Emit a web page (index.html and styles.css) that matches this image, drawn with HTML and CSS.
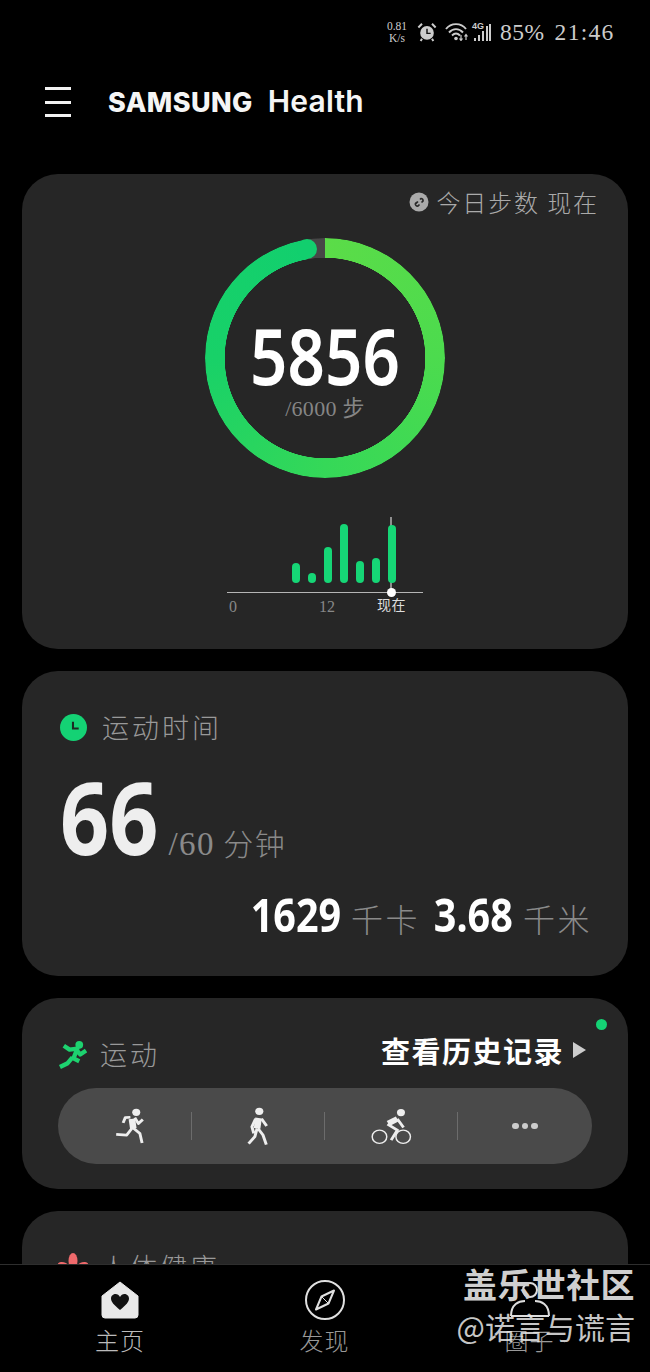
FILE: index.html
```html
<!DOCTYPE html>
<html lang="zh">
<head>
<meta charset="utf-8">
<title>Samsung Health</title>
<link rel="stylesheet" href="styles.css">
</head>
<body>
<div class="screen">
  <div class="status">
    <div class="speed">0.81<br>K/s</div>
    <svg class="st-alarm" viewBox="0 0 22 22"><circle cx="11" cy="12" r="7.5" fill="#ccc"/><path d="M11 7.5V12.5H15" fill="none" stroke="#111" stroke-width="1.6"/><path d="M1.5 6 5.5 2M20.5 6 16.500 2M5.500 18.500 4 21M16.500 18.500 18 21" stroke="#ccc" stroke-width="2.2" fill="none"/></svg>
    <svg class="st-wifi" viewBox="0 0 24 18"><path d="M1 6C6-.5 16-.5 21 6M4 9.500C8 5 14 5 18 9.500M7 12.500C9.500 10 12.500 10 15 12.500" fill="none" stroke="#ccc" stroke-width="1.900"/><circle cx="11" cy="15.500" r="1.800" fill="#ccc"/><path d="M16 12v5M14.500 15.500 16 17.500 17.500 15.500M21 17v-5M19.500 13.500 21 11.500 22.500 13.500" fill="none" stroke="#ccc" stroke-width="1.200"/></svg>
    <div class="st-net"><span class="st-4g">4G</span><svg class="st-bars" viewBox="0 0 17 18"><path d="M1 18v-3M5 18v-6M9 18v-10M13 18V3M16 18V1" stroke="#ccc" stroke-width="2" fill="none"/></svg></div>
    <span class="st-text st-pct">85%</span>
    <span class="st-text st-time">21:46</span>
  </div>

  <header class="appbar">
    <div class="burger"><i></i><i></i><i></i></div>
    <div class="logo"><span class="logo-brand">SAMSUNG</span><span class="logo-app">Health</span></div>
  </header>

  <main class="cards">
    <section class="card card-steps">
      <div class="steps-head">
        <svg class="link-icon" viewBox="0 0 20 20"><circle cx="10" cy="10" r="9.500" fill="#aaa"/><path d="M6 12.500 9 9.500M11 7.500 12 6.500A2 2 0 0 1 14 9L12.500 10.500M8 10 6.500 11.500A2 2 0 0 0 9 14L10.500 12.500" fill="none" stroke="#2a2a2a" stroke-width="1.700"/></svg>
        <span class="steps-title">今日步数 现在</span>
      </div>
      <div class="ring">
        <div class="ring-arc"></div>
        <div class="ring-cap"></div>
        <div class="ring-text">
          <div class="ring-num">5856</div>
          <div class="ring-goal">/6000 步</div>
        </div>
      </div>
      <div class="chart">
        <div class="bars">
          <i style="height:20px"></i><i style="height:10px"></i><i style="height:36px"></i><i style="height:59px"></i><i style="height:22px"></i><i style="height:25px"></i><i style="height:58px"></i>
        </div>
        <div class="now-line"></div>
        <div class="now-dot"></div>
        <div class="axis">
          <span class="axis-0">0</span><span class="axis-12">12</span><span class="axis-now">现在</span>
        </div>
      </div>
    </section>

    <section class="card card-time">
      <div class="row-title">
        <svg class="clock" viewBox="0 0 26 26"><circle cx="13" cy="13" r="13" fill="#14d274"/><path d="M12.500 7.500V14H18" fill="none" stroke="#1d2a22" stroke-width="2"/></svg>
        <span class="title-text">运动时间</span>
      </div>
      <div class="time-main">
        <span class="big-num">66</span>
        <span class="goal"><span class="goal-num">/60</span> 分钟</span>
      </div>
      <div class="time-sub">
        <span class="mid-num">1629</span><span class="unit">千卡</span>
        <span class="mid-num mid-gap">3.68</span><span class="unit">千米</span>
      </div>
    </section>

    <section class="card card-ex">
      <span class="new-dot"></span>
      <div class="ex-head">
        <div class="ex-title">
          <svg class="ex-icon" viewBox="0 0 30 30"><circle cx="22" cy="5" r="4" fill="#1dd26f"/><path d="M6 6 12 10 20 9 16 19 22 22M19 10 23 15 29 11M15 18 10 24 2 28" fill="none" stroke="#1dd26f" stroke-width="4.500" stroke-linejoin="round"/></svg>
          <span class="title-text">运动</span>
        </div>
        <div class="history"><span class="history-text">查看历史记录</span><span class="tri"></span></div>
      </div>
      <div class="pill">
        <div class="pill-cell">
          <svg class="ic-run" viewBox="205 260 85 115" preserveAspectRatio="none"><circle cx="266" cy="276" r="11" fill="#eee"/><path d="M254 296 258 325" stroke="#eee" stroke-width="18" fill="none"/><path d="M262 292 272 310 284 298M250 291 236 292 230 308M256 322 240 345 211 343M256 322 276 340 282 369" stroke="#eee" stroke-width="8" fill="none" stroke-linejoin="round"/></svg>
        </div>
        <div class="pill-cell">
          <svg class="ic-walk" viewBox="570 258 65 120" preserveAspectRatio="none"><circle cx="606" cy="274" r="11" fill="#eee"/><path d="M604 294 600 325" stroke="#eee" stroke-width="18" fill="none"/><path d="M596 296 586 320 591 340M612 296 626 318M600 325 594 350 577 371M602 325 616 345 625 374" stroke="#eee" stroke-width="8" fill="none" stroke-linejoin="round"/></svg>
        </div>
        <div class="pill-cell">
          <svg class="ic-bike" viewBox="910 260 118 118" preserveAspectRatio="none"><circle cx="995" cy="277" r="11" fill="#eee"/><circle cx="936" cy="350" r="20" fill="none" stroke="#eee" stroke-width="4"/><circle cx="1001" cy="350" r="20" fill="none" stroke="#eee" stroke-width="4"/><path d="M985 296 960 310" stroke="#eee" stroke-width="17" fill="none"/><path d="M985 296 1002 322M958 312 985 330 968 360" stroke="#eee" stroke-width="8" fill="none"/></svg>
        </div>
        <div class="pill-cell pill-more"><i></i><i></i><i></i></div>
      </div>
    </section>

    <section class="card card-body">
      <div class="row-title">
        <svg class="flower" viewBox="0 0 30 30"><g fill="#ef6a6c"><ellipse cx="15" cy="9" rx="4.500" ry="8"/><ellipse cx="6" cy="15" rx="7" ry="4.500" transform="rotate(25 6 15)"/><ellipse cx="24" cy="15" rx="7" ry="4.500" transform="rotate(-25 24 15)"/><ellipse cx="9" cy="24" rx="4" ry="7" transform="rotate(30 9 24)"/><ellipse cx="21" cy="24" rx="4" ry="7" transform="rotate(-30 21 24)"/></g></svg>
        <span class="title-text">人体健康</span>
      </div>
    </section>
  </main>

  <nav class="tabbar">
    <div class="tab">
      <svg class="tab-home" viewBox="0 0 38 38"><path d="M19 1 37 15V34a3 3 0 0 1-3 3H4a3 3 0 0 1-3-3V15Z" fill="#e8e8e8" stroke="#e8e8e8" stroke-linejoin="round"/><path d="M19 29C13 24 10 21 10 17.500 10 14.500 12.500 13 14.500 13 16.500 13 18 14 19 16 20 14 21.500 13 23.500 13 25.500 13 28 14.500 28 17.500 28 21 25 24 19 29Z" fill="#111"/></svg>
      <span class="tab-label tab-on">主页</span>
    </div>
    <div class="tab">
      <svg class="tab-compass" viewBox="0 0 40 40"><circle cx="20" cy="20" r="19" fill="none" stroke="#e0e0e0" stroke-width="2"/><path d="M29 10.500 23.500 23.500 11 29.500 16.500 16.500Z" fill="none" stroke="#e0e0e0" stroke-width="2" stroke-linejoin="round"/><path d="M16.500 16.500 23.500 23.500" stroke="#e0e0e0" stroke-width="1"/></svg>
      <span class="tab-label">发现</span>
    </div>
    <div class="tab">
      <svg class="tab-group" viewBox="0 0 42 40"><circle cx="21" cy="10" r="7" fill="none" stroke="#ddd" stroke-width="2"/><path d="M2 36C2 24 10 21 16 21M40 36C40 24 32 21 26 21M2 36H40" fill="none" stroke="#ddd" stroke-width="2"/></svg>
      <span class="tab-label">圈子</span>
    </div>
  </nav>

  <div class="watermark">
    <div class="wm-top">盖乐世社区</div>
    <div class="wm-bot">@诺言与谎言</div>
  </div>
</div>
</body>
</html>
```
FILE: styles.css
```css
* { box-sizing: border-box; }
html, body { margin: 0; padding: 0; background: #000; }
.screen {
  position: relative;
  width: 650px;
  height: 1372px;
  overflow: hidden;
  background: #000;
  color: #fff;
  font-family: "Liberation Serif", "Noto Sans CJK SC", serif;
}

/* status bar */
.status {
  height: 64px;
  padding: 0 0 0 385px;
  display: flex;
  align-items: center;
  color: #ccc;
}
.speed { width: 24px; font-size: 11.500px; line-height: 12px; text-align: center; color: #ccc; }
.st-alarm { width: 20px; height: 20px; margin-left: 8px; }
.st-wifi { width: 24px; height: 18px; margin-left: 8px; }
.st-net { position: relative; width: 21px; height: 20px; margin-left: 1px; }
.st-4g { position: absolute; left: 2px; top: -1px; font: 700 9px/10px "Liberation Sans", sans-serif; }
.st-bars { position: absolute; left: 4px; top: 1px; width: 17px; height: 18px; }
.st-text { font-size: 23.500px; line-height: 28px; white-space: nowrap; }
.st-pct { margin-left: 9px; letter-spacing: 0.500px; }
.st-time { margin-left: 10px; letter-spacing: 1.300px; }

/* app bar */
.appbar { height: 76px; display: flex; align-items: center; padding-left: 45px; }
.burger { width: 26px; height: 30px; display: flex; flex-direction: column; justify-content: space-between; }
.burger i { display: block; height: 3px; background: #f2f2f2; }
.logo { margin-left: 37px; display: flex; align-items: baseline; color: #f5f5f5; }
.logo-brand { font: 800 27px/30px Inter, sans-serif; letter-spacing: 0.400px; }
.logo-app { margin-left: 15px; font: 600 30px/30px Inter, sans-serif; letter-spacing: 0.200px; }

/* cards */
.cards { padding: 34px 22px 0; display: flex; flex-direction: column; gap: 22px; }
.card { position: relative; background: #262626; border-radius: 36px; }
.title-text { color: #999; font-size: 27px; line-height: 34px; letter-spacing: 3px; font-family: "Noto Sans CJK SC", serif; font-weight: 300; }

.card-steps { height: 475px; padding-top: 14px; display: flex; flex-direction: column; align-items: center; }
.steps-head { align-self: flex-end; display: flex; align-items: center; padding-right: 29px; height: 28px; }
.link-icon { width: 20px; height: 20px; margin-right: 7px; }
.steps-title { color: #aaa; font: 300 24px/28px "Noto Sans CJK SC", serif; letter-spacing: 1.900px; white-space: pre; }

.ring { position: relative; width: 240px; height: 240px; margin-top: 22px; }
.ring-arc {
  width: 100%;
  height: 100%;
  border-radius: 50%;
  background: conic-gradient(#5bdc48 0deg, #4cdb4e 90deg, #35d858 180deg, #18d168 270deg, #12cf6e 350.400deg, #474747 350.400deg, #474747 360deg);
  -webkit-mask: radial-gradient(closest-side, transparent calc(100% - 20px), #000 calc(100% - 19.500px));
  mask: radial-gradient(closest-side, transparent calc(100% - 20px), #000 calc(100% - 19.500px));
}
.ring-cap { position: absolute; left: 91.700px; top: 1px; width: 20px; height: 20px; border-radius: 50%; background: #12cf6e; }
.ring-text { position: absolute; inset: 0; padding-top: 88px; text-align: center; }
.ring-num { font: 600 77px/60px "Noto Sans", sans-serif; color: #fff; transform: scaleX(0.85); }
.ring-goal { margin-top: 9px; font-size: 22px; line-height: 28px; color: #858585; letter-spacing: 0.300px; }

.chart { position: relative; width: 196px; height: 76px; margin-top: 39px; border-bottom: 1px solid #b5b5b5; }
.bars { height: 66px; padding: 0 0 0 65px; display: flex; gap: 8px; align-items: flex-end; }
.bars i { width: 8px; border-radius: 4px; background: #16d676; display: block; }
.now-line { position: absolute; left: 163px; top: 0; width: 2px; height: 76px; background: #8f8f8f; z-index: 0; }
.bars i:last-child { position: relative; z-index: 1; }
.now-dot { position: absolute; left: 159.500px; top: 71px; width: 9px; height: 9px; border-radius: 50%; background: #fff; }
.axis { position: absolute; left: 0; top: 80px; width: 100%; height: 20px; font-size: 16px; line-height: 20px; color: #888; display: flex; }
.axis-0 { margin-left: 2px; }
.axis-12 { margin-left: 82px; }
.axis-now { margin-left: 42px; margin-top: -1px; font-size: 14px; color: #ddd; letter-spacing: 0.500px; white-space: nowrap; }

.card-time { height: 305px; padding: 39px 36px 0 38px; }
.row-title { display: flex; align-items: center; gap: 15px; }
.clock { width: 27px; height: 27px; }
.time-main { display: flex; align-items: baseline; margin-top: 14px; }
.big-num { font: 700 100px/116px "Noto Sans", sans-serif; color: #eee; transform: scaleX(0.86); transform-origin: left center; margin-right: -16px; }
.goal { margin-left: 10px; font: 300 30px/40px "Noto Sans CJK SC", serif; color: #8a8a8a; letter-spacing: 1.500px; }
.goal-num { font-family: "Liberation Serif", serif; font-size: 33px; font-weight: 400; }
.time-sub { display: flex; justify-content: flex-end; align-items: baseline; margin-top: 14px; }
.mid-num { font: 700 46px/52px "Noto Sans", sans-serif; color: #fff; transform: scaleX(0.86); transform-origin: right center; margin-left: -15px; }
.mid-gap { margin-left: 1px; }
.unit { margin-left: 10px; font: 300 32px/40px "Noto Sans CJK SC", serif; letter-spacing: 2.500px; color: #8a8a8a; }

.card-ex { height: 191px; padding: 30px 36px 0; }
.new-dot { position: absolute; right: 21px; top: 21px; width: 11px; height: 11px; border-radius: 50%; background: #14d274; }
.ex-head { display: flex; justify-content: space-between; align-items: flex-start; height: 60px; }
.ex-title { display: flex; align-items: center; gap: 13px; margin-top: 9px; }
.ex-icon { width: 29px; height: 29px; }
.history { display: flex; align-items: center; margin-right: 6px; }
.history-text { font: 700 29px/44px "Noto Sans CJK SC", serif; letter-spacing: 1.500px; color: #fff; }
.tri { margin-left: 9px; width: 0; height: 0; border-left: 13px solid #ccc; border-top: 8px solid transparent; border-bottom: 8px solid transparent; }
.pill { height: 76px; border-radius: 38px; background: #4a4a4a; display: grid; grid-template-columns: 134px 133px 133px 134px; align-items: center; }
.pill-cell { height: 28px; display: flex; justify-content: center; align-items: center; border-right: 1px solid #6c6c6c; }
.pill-cell:last-child { border-right: 0; }
.ic-run { width: 31px; height: 38px; margin-left: 10px; flex: none; }
.ic-walk { width: 24px; height: 40px; flex: none; margin-left: 0; }
.ic-bike { width: 43px; height: 39px; flex: none; }
.pill-more { gap: 3px; }
.pill-more i { width: 6.500px; height: 6.500px; border-radius: 50%; background: #ccc; }

.card-body { height: 200px; padding: 39px 36px 0 36px; }
.flower { width: 30px; height: 30px; }
.card-body .row-title { gap: 12px; }

/* bottom nav */
.tabbar {
  position: absolute;
  left: 0;
  right: 0;
  bottom: 0;
  height: 108px;
  padding: 15px 18px 0;
  background: #000;
  border-top: 1px solid #2e2e2e;
  display: grid;
  grid-template-columns: 204px 205px 205px;
}
.tab { display: flex; flex-direction: column; align-items: center; }
.tab svg { display: block; height: 40px; }
.tab-home { width: 38px; }
.tab-compass { width: 40px; }
.tab-group { width: 42px; }
.tab-label { margin-top: 3px; font: 300 24px/34px "Noto Sans CJK SC", serif; letter-spacing: 1px; color: #999; }
.tab-on { color: #bbb; }

.watermark { position: absolute; left: 450px; top: 1264px; width: 185px; text-align: right; font-family: "Noto Sans CJK SC", sans-serif; }
.wm-top { font-size: 34px; line-height: 40px; font-weight: 700; color: #cfcfcf; white-space: nowrap; letter-spacing: 0.400px; }
.wm-bot { margin-top: 2px; font-size: 30px; line-height: 40px; font-weight: 400; color: rgba(235,235,235,.85); white-space: nowrap; }
```
